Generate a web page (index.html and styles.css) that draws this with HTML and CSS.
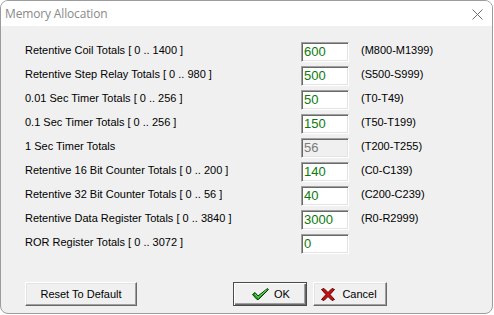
FILE: index.html
```html
<!DOCTYPE html>
<html>
<head>
<meta charset="utf-8">
<link rel="stylesheet" href="styles.css">
</head>
<body>
<div class="window">
  <div class="titlebar">
    <span class="title">Memory Allocation</span>
    <svg class="close" width="11" height="11" viewBox="0 0 11 11"><path d="M0.5 0.5 L10.5 10.5 M10.5 0.5 L0.5 10.5" stroke="#6f6f6f" stroke-width="1" fill="none"/></svg>
  </div>
  <div class="content">
    <div class="rows">
      <div class="label">Retentive Coil Totals [ 0 .. 1400 ]</div><div class="field">600</div><div class="range">(M800-M1399)</div>
      <div class="label">Retentive Step Relay Totals [ 0 .. 980 ]</div><div class="field">500</div><div class="range">(S500-S999)</div>
      <div class="label">0.01 Sec Timer Totals [ 0 .. 256 ]</div><div class="field">50</div><div class="range">(T0-T49)</div>
      <div class="label">0.1 Sec Timer Totals [ 0 .. 256 ]</div><div class="field">150</div><div class="range">(T50-T199)</div>
      <div class="label">1 Sec Timer Totals</div><div class="field disabled">56</div><div class="range">(T200-T255)</div>
      <div class="label">Retentive 16 Bit Counter Totals [ 0 .. 200 ]</div><div class="field">140</div><div class="range">(C0-C139)</div>
      <div class="label">Retentive 32 Bit Counter Totals [ 0 .. 56 ]</div><div class="field">40</div><div class="range">(C200-C239)</div>
      <div class="label">Retentive Data Register Totals [ 0 .. 3840 ]</div><div class="field">3000</div><div class="range">(R0-R2999)</div>
      <div class="label">ROR Register Totals [ 0 .. 3072 ]</div><div class="field">0</div><div class="range"></div>
    </div>
    <div class="buttons">
      <div class="btn reset">Reset To Default</div>
      <div class="btn ok default">
        <svg class="icon" width="17" height="12" viewBox="0 0 17 12"><path d="M0.5 6.5 L3 4.5 L6 8 L15.5 0.5 L16.5 1.5 L6.5 11.5 L5 11.5 Z" fill="#17a117" stroke="#0a3a0a" stroke-width="1" stroke-linejoin="round"/><path d="M3 6 L6 9.5 L14.5 2" stroke="#6fe06f" stroke-width="1" fill="none"/></svg>
        <span>OK</span>
      </div>
      <div class="btn cancel">
        <svg class="icon" width="14" height="13" viewBox="0 0 14 13"><path d="M0.5 1.5 L3 0.5 L7 4.5 L11 0.5 L13.5 1.5 L9 6.5 L13.5 11.5 L11 12.5 L7 8.5 L3 12.5 L0.5 11.5 L5 6.5 Z" fill="#cc1010" stroke="#5a0000" stroke-width="1" stroke-linejoin="round"/></svg>
        <span>Cancel</span>
      </div>
    </div>
  </div>
</div>
</body>
</html>
```

FILE: styles.css
```css
html, body {
  margin: 0;
  padding: 0;
  background: #ffffff;
}
.window {
  width: 493px;
  height: 314px;
  box-sizing: border-box;
  border: 1px solid #9c9c9c;
  border-radius: 8px;
  background: #f0f0f0;
  overflow: hidden;
  font-family: "Liberation Sans", Arial, sans-serif;
  font-size: 11px;
  color: #000;
}
.titlebar {
  height: 25px;
  background: #ffffff;
  display: flex;
  align-items: center;
  justify-content: space-between;
  padding: 0 9px 0 4px;
}
.title {
  font-family: "Open Sans", "Noto Sans", sans-serif;
  font-size: 12px;
  color: #8a8a8a;
  letter-spacing: -0.15px;
}
.close {
  display: block;
  margin-top: 1px;
}
.content {
  padding: 16px 0 0 24px;
}
.rows {
  display: grid;
  grid-template-columns: 264px 48px auto;
  grid-auto-rows: 20px;
  row-gap: 4px;
  column-gap: 12px;
}
.label, .range {
  line-height: 14px;
  padding-top: 1px;
  white-space: nowrap;
}
.field {
  box-sizing: border-box;
  height: 20px;
  background: #ffffff;
  border-top: 1px solid #a0a0a0;
  border-left: 1px solid #a0a0a0;
  border-right: 1px solid #ffffff;
  border-bottom: 1px solid #ffffff;
  box-shadow: inset 1px 1px 0 #696969, inset -1px -1px 0 #e3e3e3;
  color: #0a7a0a;
  font-size: 13px;
  line-height: 18px;
  padding-left: 2px;
}
.field.disabled {
  background: #f0f0f0;
  color: #7a7a7a;
}
.buttons {
  display: flex;
  margin-top: 28px;
}
.btn {
  box-sizing: border-box;
  height: 24px;
  background: #f0f0f0;
  border-top: 1px solid #ffffff;
  border-left: 1px solid #ffffff;
  border-right: 1px solid #696969;
  border-bottom: 1px solid #696969;
  box-shadow: inset -1px -1px 0 #a0a0a0, inset 1px 1px 0 #e3e3e3;
  display: flex;
  align-items: center;
  justify-content: center;
  font-size: 11px;
}
.reset {
  width: 112px;
}
.ok {
  width: 74px;
  margin-left: 96px;
}
.cancel {
  width: 74px;
  margin-left: 6px;
}
.btn.default {
  border: 1px solid #4a4a4a;
  box-shadow: inset 1px 1px 0 #ffffff, inset -1px -1px 0 #696969, inset -2px -2px 0 #a0a0a0;
}
.icon {
  display: block;
  margin-right: 6px;
}
.ok .icon { margin-right: 5px; margin-left: 2px; }
.cancel .icon { margin-right: 7px; margin-left: -2px; }
```
